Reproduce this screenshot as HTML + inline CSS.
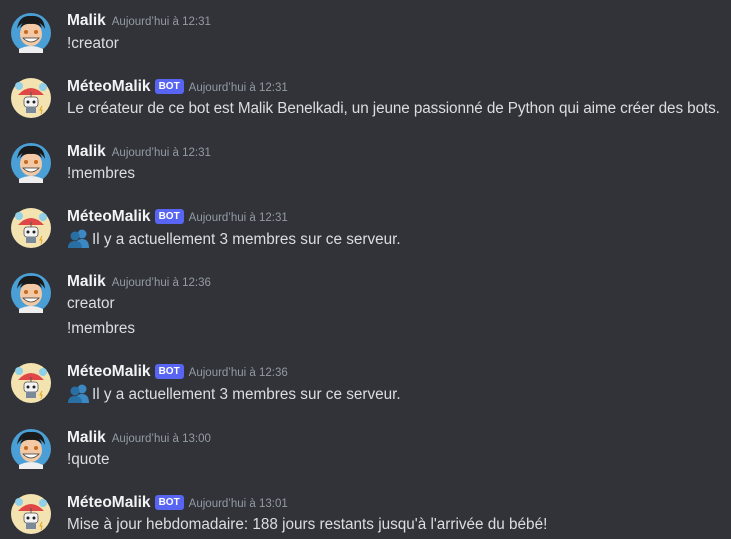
<!DOCTYPE html>
<html><head><meta charset="utf-8"><style>
body{margin:0;width:731px;height:539px;background:#313338;overflow:hidden;position:relative;font-family:"Liberation Sans","DejaVu Sans",sans-serif}
.h{position:absolute;left:67px;height:22px;line-height:22px;white-space:nowrap}
.n{color:#f2f3f5;font-weight:bold;font-size:15.5px}
.t{color:#949ba4;font-size:11.5px;margin-left:6px}
.b{display:inline-block;background:#5865f2;color:#fff;font-size:10px;font-weight:bold;height:15px;line-height:15px;padding:0 4px;border-radius:3px;margin-left:4px;vertical-align:2px}
.b+.t{margin-left:5px}
.c{position:absolute;left:67px;color:#dbdee1;font-size:15.3px;height:22px;line-height:22px;white-space:nowrap}
.a{position:absolute;left:11px;width:40px;height:40px}
.p{display:inline-block;width:22px;height:20px;vertical-align:-4px;margin-right:3px}
</style></head><body>
<svg width="0" height="0" style="position:absolute"><defs>
<g id="m"><circle cx="20" cy="20" r="20" fill="#4a9fd6"/><path d="M6 16 Q8 2 20 3 Q33 2 34 16 Q30 8 20 9 Q10 8 6 16Z" fill="#1b1b1b"/><ellipse cx="20" cy="21" rx="11" ry="12" fill="#f3c9a5"/><path d="M9 15 Q12 6 20 8 Q28 6 31 15 Q26 10 20 11 Q14 10 9 15Z" fill="#1b1b1b"/><circle cx="15" cy="19" r="2" fill="#c86a1e"/><circle cx="25" cy="19" r="2" fill="#c86a1e"/><path d="M12 25 Q20 33 28 25Z" fill="#fff" stroke="#333" stroke-width=".7"/><path d="M8 36 Q20 30 32 36 L32 40 L8 40Z" fill="#eee"/></g>
<g id="w"><circle cx="20" cy="20" r="20" fill="#f3e3b0"/><circle cx="8" cy="8" r="4" fill="#8fd0e8"/><circle cx="32" cy="9" r="4" fill="#8fd0e8"/><path d="M7 17 Q20 3 33 17Z" fill="#e04848"/><line x1="20" y1="14" x2="20" y2="22" stroke="#555"/><rect x="13" y="19" width="14" height="10" rx="3" fill="#f4f4f4" stroke="#555" stroke-width=".8"/><circle cx="17" cy="24" r="1.5" fill="#222"/><circle cx="23" cy="24" r="1.5" fill="#222"/><rect x="15" y="29" width="10" height="6" fill="#7b8a9a"/><path d="M31 28 l-2 4 h2 l-1 4" stroke="#e8a020" fill="none"/></g>
<g id="pp"><circle cx="15" cy="6" r="4.5" fill="#3b88c3"/><path d="M8 20 Q8 11 15 11 Q22 11 22 20Z" fill="#3b88c3"/><circle cx="8" cy="8" r="4.5" fill="#2a6fa3"/><path d="M1 20 Q1 13 8 13 Q15 13 15 20Z" fill="#2a6fa3"/></g>
</defs></svg>

<svg class="a" style="top:13px"><use href="#m"/></svg>
<div class="h" style="top:10px"><span class="n">Malik</span><span class="t">Aujourd’hui à 12:31</span></div>
<div class="c" style="top:33px">!creator</div>

<svg class="a" style="top:78px"><use href="#w"/></svg>
<div class="h" style="top:76px"><span class="n">MéteoMalik</span><span class="b">BOT</span><span class="t">Aujourd’hui à 12:31</span></div>
<div class="c" style="top:98px;letter-spacing:-0.1px">Le créateur de ce bot est Malik Benelkadi, un jeune passionné de Python qui aime créer des bots.</div>

<svg class="a" style="top:143px"><use href="#m"/></svg>
<div class="h" style="top:141px"><span class="n">Malik</span><span class="t">Aujourd’hui à 12:31</span></div>
<div class="c" style="top:163px">!membres</div>

<svg class="a" style="top:208px"><use href="#w"/></svg>
<div class="h" style="top:206px"><span class="n">MéteoMalik</span><span class="b">BOT</span><span class="t">Aujourd’hui à 12:31</span></div>
<div class="c" style="top:228px"><svg class="p"><use href="#pp"/></svg>Il y a actuellement 3 membres sur ce serveur.</div>

<svg class="a" style="top:273px"><use href="#m"/></svg>
<div class="h" style="top:271px"><span class="n">Malik</span><span class="t">Aujourd’hui à 12:36</span></div>
<div class="c" style="top:293px">creator</div>
<div class="c" style="top:318px">!membres</div>

<svg class="a" style="top:363px"><use href="#w"/></svg>
<div class="h" style="top:361px"><span class="n">MéteoMalik</span><span class="b">BOT</span><span class="t">Aujourd’hui à 12:36</span></div>
<div class="c" style="top:383px"><svg class="p"><use href="#pp"/></svg>Il y a actuellement 3 membres sur ce serveur.</div>

<svg class="a" style="top:429px"><use href="#m"/></svg>
<div class="h" style="top:427px"><span class="n">Malik</span><span class="t">Aujourd’hui à 13:00</span></div>
<div class="c" style="top:449px">!quote</div>

<svg class="a" style="top:494px"><use href="#w"/></svg>
<div class="h" style="top:492px"><span class="n">MéteoMalik</span><span class="b">BOT</span><span class="t">Aujourd’hui à 13:01</span></div>
<div class="c" style="top:514px">Mise à jour hebdomadaire: 188 jours restants jusqu'à l'arrivée du bébé!</div>
</body></html>
